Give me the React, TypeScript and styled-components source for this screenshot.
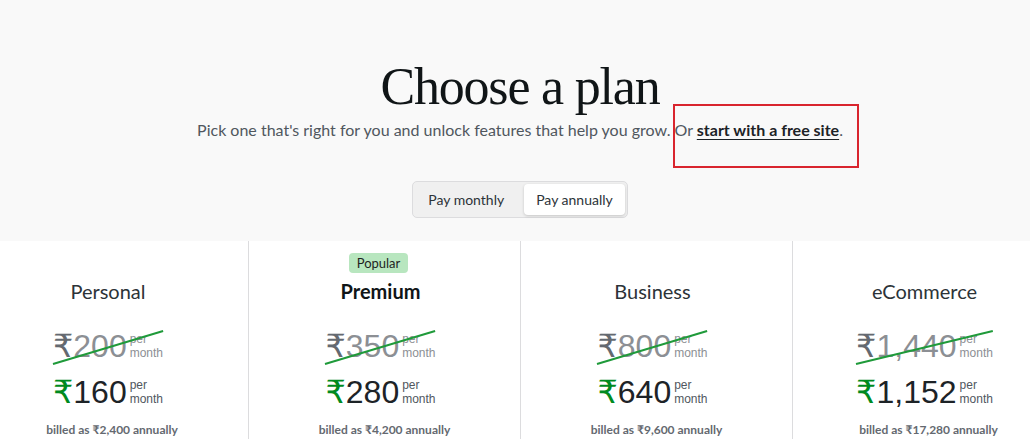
import styled, { createGlobalStyle } from 'styled-components';

const GlobalStyle = createGlobalStyle`
	html, body {
		margin: 0;
		padding: 0;
		background: #fff;
		overflow: hidden;
	}
	body {
		font-family: Lato, "Open Sans", "DejaVu Sans", sans-serif;
		color: #1d2327;
	}
`;

const Page = styled.div`
	position: relative;
	width: 1040px;
`;

const Header = styled.header`
	background: #f9f9f9;
	display: flex;
	flex-direction: column;
	align-items: center;
	padding: 57px 0 23px;
`;

const Title = styled.h1`
	margin: 0;
	font-family: 'Liberation Serif', 'DejaVu Serif', serif;
	font-weight: 400;
	font-size: 52px;
	line-height: 60px;
	letter-spacing: -1.2px;
	color: #101517;
`;

const Subtitle = styled.p`
	margin: 2px 0 0;
	font-size: 16px;
	line-height: 22px;
	color: #50575e;

	a {
		color: #1d2327;
		font-weight: 700;
		text-decoration: underline;
		text-underline-offset: 3px;
	}
`;

const Toggle = styled.div`
	margin-top: 40px;
	display: flex;
	gap: 3px;
	padding: 2px;
	background: #f0f0f0;
	border: 1px solid #dcdcde;
	border-radius: 5px;
`;

const ToggleButton = styled.button<{ $active?: boolean }>`
	font-family: inherit;
	font-size: 14px;
	color: #2c3338;
	height: 31px;
	padding: ${(p) => (p.$active ? '0 12px' : '0 17px 0 13px')};
	border: none;
	border-radius: 4px;
	background: ${(p) => (p.$active ? '#fff' : 'transparent')};
	box-shadow: ${(p) => (p.$active ? '0 1px 3px rgba(0,0,0,0.18)' : 'none')};
	cursor: pointer;
`;

const Plans = styled.section`
	display: grid;
	grid-template-columns: repeat(4, 272px);
	margin-left: -24px;
`;

const Plan = styled.div`
	display: flex;
	flex-direction: column;
	align-items: center;
	padding-top: 12px;
	min-height: 260px;

	&:not(:first-child) {
		border-left: 1px solid #dcdcde;
	}
`;

const BadgeSlot = styled.div`
	height: 20px;
	display: flex;
	justify-content: center;
	transform: translateX(-6px);
`;

const Badge = styled.span`
	background: #b8e6bf;
	color: #1e1e1e;
	font-size: 13px;
	line-height: 20px;
	padding: 0 8px;
	border-radius: 4px;
`;

const PlanName = styled.h2<{ $featured?: boolean }>`
	margin: 4px 0 0;
	font-size: 20px;
	line-height: 28px;
	font-weight: ${(p) => (p.$featured ? 700 : 400)};
	color: ${(p) => (p.$featured ? '#101517' : '#2c3338')};
	transform: translateX(-4px);
`;

const PriceRow = styled.div<{ $old?: boolean }>`
	position: relative;
	display: flex;
	align-items: center;
	height: 40px;
	margin-top: ${(p) => (p.$old ? '21px' : '6px')};
	transform: translateX(-4px);
	font-family: 'Liberation Sans', 'DejaVu Sans', sans-serif;
`;

const Rupee = styled.span<{ $old?: boolean }>`
	font-size: 32px;
	color: ${(p) => (p.$old ? '#646970' : '#008a20')};
`;

const Amount = styled.span<{ $old?: boolean }>`
	font-size: 32px;
	color: ${(p) => (p.$old ? '#8c8f94' : '#1d2327')};
	margin-right: 3px;
`;

const Per = styled.span<{ $old?: boolean }>`
	display: flex;
	flex-direction: column;
	font-size: 12px;
	line-height: 14px;
	color: ${(p) => (p.$old ? '#8c8f94' : '#50575e')};
`;

const Strike = styled.svg`
	position: absolute;
	left: 0;
	right: 0;
	top: 5px;
	width: 100%;
	height: 33px;
	overflow: visible;
`;

const Billed = styled.div`
	margin-top: 10px;
	font-size: 12px;
	line-height: 16px;
	font-weight: 700;
	color: #646970;
`;

const Annotation = styled.div`
	position: absolute;
	left: 673px;
	top: 104px;
	width: 182px;
	height: 60px;
	border: 2px solid #d9252e;
`;

interface PlanData {
	name: string;
	old: string;
	price: string;
	billed: string;
	popular?: boolean;
}

const plans: PlanData[] = [
	{ name: 'Personal', old: '200', price: '160', billed: '₹2,400' },
	{ name: 'Premium', old: '350', price: '280', billed: '₹4,200', popular: true },
	{ name: 'Business', old: '800', price: '640', billed: '₹9,600' },
	{ name: 'eCommerce', old: '1,440', price: '1,152', billed: '₹17,280' },
];

function App() {
	return (
		<Page>
			<GlobalStyle />
			<Header>
				<Title>Choose a plan</Title>
				<Subtitle>
					Pick one that's right for you and unlock features that help you grow. Or{' '}
					<a href="#">start with a free site</a>.
				</Subtitle>
				<Toggle>
					<ToggleButton>Pay monthly</ToggleButton>
					<ToggleButton $active>Pay annually</ToggleButton>
				</Toggle>
			</Header>
			<Plans>
				{plans.map((plan) => (
					<Plan key={plan.name}>
						<BadgeSlot>{plan.popular && <Badge>Popular</Badge>}</BadgeSlot>
						<PlanName $featured={plan.popular}>{plan.name}</PlanName>
						<PriceRow $old>
							<Rupee $old>₹</Rupee>
							<Amount $old>{plan.old}</Amount>
							<Per $old>
								<span>per</span>
								<span>month</span>
							</Per>
							<Strike viewBox="0 0 100 33" preserveAspectRatio="none">
								<line
									x1="0"
									y1="33"
									x2="100"
									y2="0"
									stroke="#1f9a3a"
									strokeWidth="2"
									vectorEffect="non-scaling-stroke"
								/>
							</Strike>
						</PriceRow>
						<PriceRow>
							<Rupee>₹</Rupee>
							<Amount>{plan.price}</Amount>
							<Per>
								<span>per</span>
								<span>month</span>
							</Per>
						</PriceRow>
						<Billed>billed as {plan.billed} annually</Billed>
					</Plan>
				))}
			</Plans>
			<Annotation />
		</Page>
	);
}

export default App;
